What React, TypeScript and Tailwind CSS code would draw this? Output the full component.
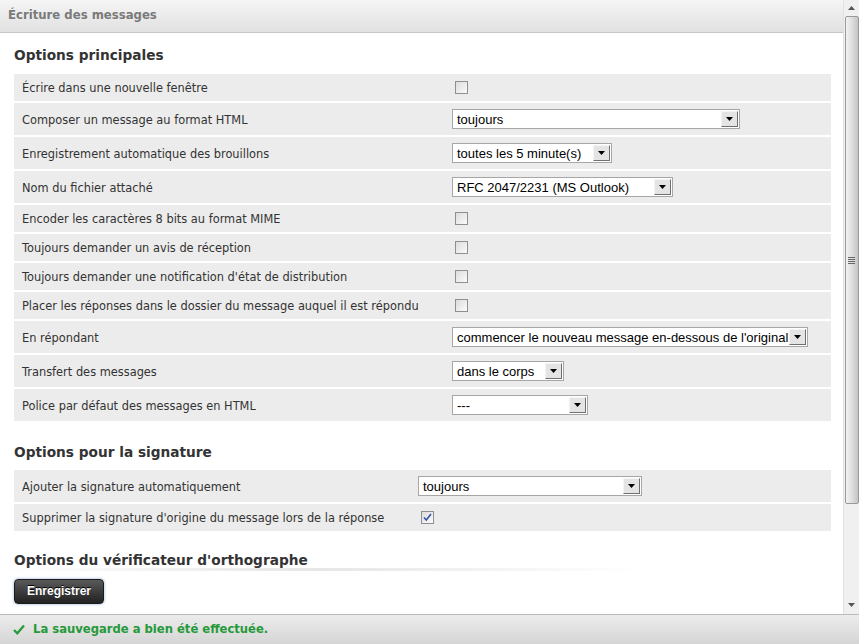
import React from "react";

type Row =
  | { label: string; kind: "check"; checked?: boolean }
  | { label: string; kind: "select"; value: string; width: number };

const mainRows: Row[] = [
  { label: "Écrire dans une nouvelle fenêtre", kind: "check" },
  { label: "Composer un message au format HTML", kind: "select", value: "toujours", width: 288 },
  { label: "Enregistrement automatique des brouillons", kind: "select", value: "toutes les 5 minute(s)", width: 160 },
  { label: "Nom du fichier attaché", kind: "select", value: "RFC 2047/2231 (MS Outlook)", width: 221 },
  { label: "Encoder les caractères 8 bits au format MIME", kind: "check" },
  { label: "Toujours demander un avis de réception", kind: "check" },
  { label: "Toujours demander une notification d'état de distribution", kind: "check" },
  { label: "Placer les réponses dans le dossier du message auquel il est répondu", kind: "check" },
  { label: "En répondant", kind: "select", value: "commencer le nouveau message en-dessous de l'original", width: 356 },
  { label: "Transfert des messages", kind: "select", value: "dans le corps", width: 112 },
  { label: "Police par défaut des messages en HTML", kind: "select", value: "---", width: 136 },
];

const signatureRows: Row[] = [
  { label: "Ajouter la signature automatiquement", kind: "select", value: "toujours", width: 224 },
  { label: "Supprimer la signature d'origine du message lors de la réponse", kind: "check", checked: true },
];

function Checkbox({ checked }: { checked?: boolean }) {
  return (
    <div className="ml-[3px] w-[13px] h-[13px] border border-[#8e8f8f] bg-gradient-to-br from-[#dcdcdc] to-[#fbfbfb] flex items-center justify-center">
      {checked && (
        <svg width="9" height="9" viewBox="0 0 9 9">
          <path d="M1 4.5 L3.3 7 L8 1" fill="none" stroke="#3b56a8" strokeWidth="1.7" />
        </svg>
      )}
    </div>
  );
}

function Select({ value, width }: { value: string; width: number }) {
  return (
    <div
      className="h-[20px] border border-[#a6a6a6] bg-white flex items-stretch font-['Liberation_Sans'] text-[13px] text-black"
      style={{ width }}
    >
      <div className="flex-1 pl-[4px] flex items-center whitespace-nowrap overflow-hidden leading-none">{value}</div>
      <div className="w-[17px] m-[1px] ml-0 border border-t-[#f4f4f4] border-l-[#f4f4f4] border-r-[#6f6f6f] border-b-[#6f6f6f] bg-[#e4e4e4] flex items-center justify-center">
        <svg width="7" height="4" viewBox="0 0 7 4">
          <path d="M0 0 H7 L3.5 4 Z" fill="#000" />
        </svg>
      </div>
    </div>
  );
}

function OptionRows({ rows, labelWidth }: { rows: Row[]; labelWidth: number }) {
  return (
    <div className="flex flex-col gap-[2px]">
      {rows.map((r) => (
        <div
          key={r.label}
          className={`flex items-center bg-[#ececec] ${r.kind === "check" ? "h-[27px]" : "h-[32px]"}`}
        >
          <div className="pl-[8px] pt-[3px] shrink-0 text-[11.4px] text-[#333] whitespace-nowrap" style={{ width: labelWidth }}>
            {r.label}
          </div>
          <div className="pl-[8px]">
            {r.kind === "check" ? <Checkbox checked={r.checked} /> : <Select value={r.value} width={r.width} />}
          </div>
        </div>
      ))}
    </div>
  );
}

function Scrollbar() {
  return (
    <div className="w-[16px] bg-[#f0f0f0] border-l border-[#e2e2e2] flex flex-col items-center">
      <div className="h-[16px] flex items-center justify-center">
        <svg width="7" height="4" viewBox="0 0 7 4"><path d="M0 4 H7 L3.5 0 Z" fill="#555" /></svg>
      </div>
      <div className="w-[14px] h-[488px] rounded-[2px] border border-[#9a9a9a] bg-gradient-to-r from-[#f2f2f2] via-[#dedede] to-[#c4c4c4] flex items-center justify-center">
        <div className="flex flex-col gap-[1px]">
          <div className="w-[7px] h-[1px] bg-[#666]" />
          <div className="w-[7px] h-[1px] bg-[#666]" />
          <div className="w-[7px] h-[1px] bg-[#666]" />
          <div className="w-[7px] h-[1px] bg-[#666]" />
        </div>
      </div>
      <div className="flex-1" />
      <div className="h-[18px] flex items-center justify-center">
        <svg width="7" height="4" viewBox="0 0 7 4"><path d="M0 0 H7 L3.5 4 Z" fill="#555" /></svg>
      </div>
    </div>
  );
}

export default function App() {
  return (
    <div className="w-[859px] h-[644px] flex flex-col overflow-hidden bg-white font-['DejaVu_Sans',sans-serif]">
      <div className="flex flex-1 min-h-0">
        <div className="flex-1 flex flex-col min-w-0">
          <div className="h-[33px] shrink-0 bg-gradient-to-b from-[#f5f5f5] to-[#e1e1e1] border-b border-[#c6c6c6] flex items-center pl-[8px]">
            <span className="text-[11.7px] font-bold text-[#7a7a7a]">Écriture des messages</span>
          </div>

          <main className="flex-1 min-h-0 overflow-hidden pl-[14px] pr-[12px]">
            <h2 className="mt-[12px] mb-[9px] h-[20px] leading-[20px] text-[13.7px] font-bold text-[#333]">Options principales</h2>
            <OptionRows rows={mainRows} labelWidth={430} />

            <h2 className="mt-[21px] mb-[8px] h-[20px] leading-[20px] text-[13.7px] font-bold text-[#333]">Options pour la signature</h2>
            <OptionRows rows={signatureRows} labelWidth={396} />

            <h2 className="mt-[19px] h-[20px] leading-[20px] text-[13.7px] font-bold text-[#333]">Options du vérificateur d'orthographe</h2>
          </main>

          <div className="h-[46px] shrink-0 bg-white relative pl-[14px] pt-[10px]">
            <div className="absolute left-0 top-0 w-[640px] h-[3px] bg-gradient-to-r from-[#ffffff] via-[#e6e6e6] to-transparent" />
            <button className="w-[90px] h-[25px] rounded-[4px] border border-[#1b1b1b] bg-gradient-to-b from-[#5a5a5a] to-[#222] shadow-[0_0_3px_rgba(90,140,200,0.7)] text-white text-[12px] font-bold font-['Liberation_Sans'] [text-shadow:0_-1px_0_#000]">
              Enregistrer
            </button>
          </div>
        </div>
        <Scrollbar />
      </div>

      <footer className="h-[30px] shrink-0 border-t border-[#b9b9b9] bg-gradient-to-b from-[#ececec] to-[#d5d5d5] flex items-center pl-[13px] gap-[8px]">
        <svg width="12" height="11" viewBox="0 0 12 11">
          <path d="M1 6 L4.3 9.3 L11 1.5" fill="none" stroke="#2a9b3b" strokeWidth="2.3" />
        </svg>
        <span className="text-[11.6px] font-bold text-[#25993a]">La sauvegarde a bien été effectuée.</span>
      </footer>
    </div>
  );
}
